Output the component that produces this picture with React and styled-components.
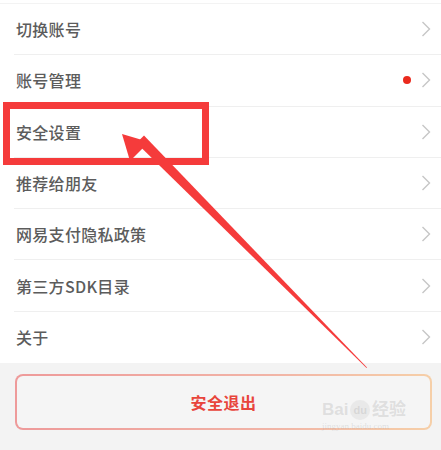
import React from "react";
import styled, { createGlobalStyle } from "styled-components";

const items = [
  { label: "切换账号" },
  { label: "账号管理", dot: true },
  { label: "安全设置" },
  { label: "推荐给朋友" },
  { label: "网易支付隐私政策" },
  { label: "第三方SDK目录" },
  { label: "关于" },
];

function Chevron() {
  return (
    <svg width="10" height="16" viewBox="0 0 10 16">
      <path d="M1.5 1 L8.5 8 L1.5 15" fill="none" stroke="#c6c6c6" strokeWidth="1.4" />
    </svg>
  );
}

function App() {
  return (
    <Page>
      <GlobalStyle />
      <Menu>
        {items.map((it) => (
          <Row key={it.label}>
            <Label>{it.label}</Label>
            <Right>
              {it.dot && <Dot />}
              <Chevron />
            </Right>
          </Row>
        ))}
      </Menu>

      <Footer>
        <ExitButton>安全退出</ExitButton>
      </Footer>

      {/* 标注：红框和箭头 */}
      <Highlight />
      <Arrow width="441" height="450" viewBox="0 0 441 450">
        <polygon points="136.5,143 144,135.5 367,367.5 366.5,368" fill="#f53b3b" />
        <polygon points="122,134 149,142 130,161" fill="#f53b3b" />
      </Arrow>

      <Watermark>
        <Brand>Bai<Paw>du</Paw>经验</Brand>
        <Site>jingyan.baidu.com</Site>
      </Watermark>
    </Page>
  );
}

const GlobalStyle = createGlobalStyle`
  html, body {
    margin: 0;
    padding: 0;
    background: #ffffff;
  }
  * { box-sizing: border-box; }
`;

const Page = styled.div`
  position: relative;
  width: 441px;
  height: 450px;
  overflow: hidden;
  background: #fff;
  font-family: "Noto Sans CJK SC", "Noto Sans", sans-serif;
`;

const Menu = styled.div`
  margin-top: 3px;
  border-top: 1px solid #f3f3f3;
`;

const Row = styled.div`
  height: 51.3px;
  margin-left: 14px;
  padding-right: 10px;
  display: flex;
  align-items: center;
  justify-content: space-between;
  border-bottom: 1px solid #efefef;
  &:last-child {
    border-bottom: none;
  }
`;

const Label = styled.span`
  font-size: 16px;
  font-weight: 500;
  color: #5c5c5c;
  padding-left: 2px;
  letter-spacing: 0.3px;
`;

const Right = styled.div`
  display: flex;
  align-items: center;
  gap: 10px;
`;

const Dot = styled.span`
  width: 8px;
  height: 8px;
  border-radius: 50%;
  background: #ea2a1d;
`;

const Footer = styled.div`
  height: 90px;
  background: #f3f3f3;
  padding: 11px 9px 0 15px;
`;

const ExitButton = styled.div`
  height: 56px;
  border: 2px solid transparent;
  border-radius: 8px;
  background:
    linear-gradient(#f5f5f5, #f5f5f5) padding-box,
    linear-gradient(90deg, #ee9a9a, #f1b3a6 60%, #f6cfa8) border-box;
  display: flex;
  align-items: center;
  justify-content: center;
  font-size: 16px;
  font-weight: 700;
  color: #e8453c;
  letter-spacing: 0.5px;
`;

const Highlight = styled.div`
  position: absolute;
  left: 3px;
  top: 102px;
  width: 206px;
  height: 63px;
  border: 7px solid #f53b3b;
`;

const Arrow = styled.svg`
  position: absolute;
  left: 0;
  top: 0;
  pointer-events: none;
`;

const Watermark = styled.div`
  position: absolute;
  left: 322px;
  top: 400px;
  display: flex;
  flex-direction: column;
  align-items: flex-start;
  color: rgba(170, 170, 170, 0.3);
  font-family: "Liberation Sans", "Noto Sans CJK SC", sans-serif;
  pointer-events: none;
`;

const Brand = styled.div`
  font-size: 17px;
  font-weight: 700;
  line-height: 18px;
  display: flex;
  align-items: center;
  gap: 2px;
`;

const Paw = styled.span`
  font-size: 11px;
  border-radius: 50%;
  background: rgba(200, 200, 200, 0.25);
  padding: 1px 3px;
`;

const Site = styled.div`
  font-size: 9px;
  font-family: "Liberation Serif", serif;
  line-height: 12px;
`;

export default App;
